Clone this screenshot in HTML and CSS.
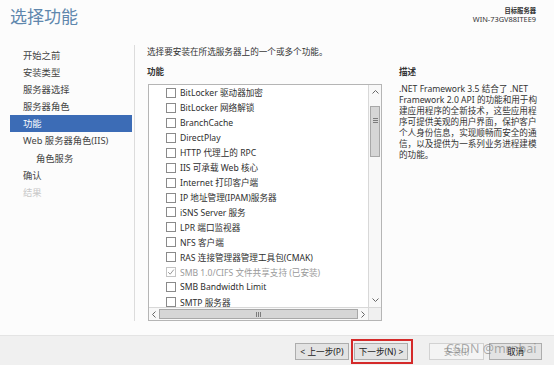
FILE: index.html
```html
<!DOCTYPE html>
<html>
<head>
  <meta charset="UTF-8">
  <title>添加角色和功能向导 - 选择功能</title>
  <link rel="stylesheet" href="styles.css">
</head>
<body>
  <div class="header">
    <h1 class="title">选择功能</h1>
    <div class="target">
      <div class="target-label">目标服务器</div>
      <div class="target-name">WIN-73GV88ITEE9</div>
    </div>
  </div>

  <div class="main">
    <div class="nav">
      <div class="nav-item">开始之前</div>
      <div class="nav-item">安装类型</div>
      <div class="nav-item">服务器选择</div>
      <div class="nav-item">服务器角色</div>
      <div class="nav-item active">功能</div>
      <div class="nav-item">Web 服务器角色(IIS)</div>
      <div class="nav-item sub">角色服务</div>
      <div class="nav-item">确认</div>
      <div class="nav-item disabled">结果</div>
    </div>

    <div class="content">
      <p class="intro">选择要安装在所选服务器上的一个或多个功能。</p>
      <div class="columns">
        <div class="features">
          <h2 class="heading">功能</h2>
          <div class="listbox">
            <div class="items">
              <div class="item"><span class="check"></span>BitLocker 驱动器加密</div>
              <div class="item"><span class="check"></span>BitLocker 网络解锁</div>
              <div class="item"><span class="check"></span>BranchCache</div>
              <div class="item"><span class="check"></span>DirectPlay</div>
              <div class="item"><span class="check"></span>HTTP 代理上的 RPC</div>
              <div class="item"><span class="check"></span>IIS 可承载 Web 核心</div>
              <div class="item"><span class="check"></span>Internet 打印客户端</div>
              <div class="item"><span class="check"></span>IP 地址管理(IPAM)服务器</div>
              <div class="item"><span class="check"></span>iSNS Server 服务</div>
              <div class="item"><span class="check"></span>LPR 端口监视器</div>
              <div class="item"><span class="check"></span>NFS 客户端</div>
              <div class="item"><span class="check"></span>RAS 连接管理器管理工具包(CMAK)</div>
              <div class="item installed"><span class="check"><svg width="8" height="8" viewBox="0 0 8 8"><path d="M1.2 4.2 L3.2 6.2 L6.8 1.6" fill="none" stroke="#9a9a9a" stroke-width="1"/></svg></span>SMB 1.0/CIFS 文件共享支持 (已安装)</div>
              <div class="item"><span class="check"></span>SMB Bandwidth Limit</div>
              <div class="item"><span class="check"></span>SMTP 服务器</div>
            </div>
            <div class="vscroll">
              <div class="arrow"><svg width="7" height="4" viewBox="0 0 7 4"><path d="M0.5 3.5 L3.5 0.5 L6.5 3.5" fill="none" stroke="#666" stroke-width="1"/></svg></div>
              <div class="track">
                <div class="vthumb"><span class="grip"></span></div>
              </div>
              <div class="arrow"><svg width="7" height="4" viewBox="0 0 7 4"><path d="M0.5 0.5 L3.5 3.5 L6.5 0.5" fill="none" stroke="#666" stroke-width="1"/></svg></div>
            </div>
            <div class="hscroll">
              <div class="arrow"><svg width="4" height="7" viewBox="0 0 4 7"><path d="M3.5 0.5 L0.5 3.5 L3.5 6.5" fill="none" stroke="#666" stroke-width="1"/></svg></div>
              <div class="hthumb"><span class="hgrip"></span></div>
              <div class="arrow"><svg width="4" height="7" viewBox="0 0 4 7"><path d="M0.5 0.5 L3.5 3.5 L0.5 6.5" fill="none" stroke="#666" stroke-width="1"/></svg></div>
            </div>
            <div class="corner"></div>
          </div>
        </div>

        <div class="description">
          <h2 class="heading">描述</h2>
          <p class="desc-text">.NET Framework 3.5 结合了 .NET<br>Framework 2.0 API 的功能和用于构<br>建应用程序的全新技术，这些应用程<br>序可提供美观的用户界面，保护客户<br>个人身份信息，实现顺畅而安全的通<br>信，以及提供为一系列业务进程建模<br>的功能。</p>
        </div>
      </div>
    </div>
  </div>

  <div class="footer">
    <button class="btn">&lt; 上一步(P)</button>
    <span class="highlight"><button class="btn">下一步(N) &gt;</button></span>
    <button class="btn install" disabled>安装(I)</button>
    <button class="btn cancel">取消</button>
    <span class="watermark">CSDN @mrnbai</span>
  </div>
</body>
</html>
```

FILE: styles.css
```css
:root {
  --title-color: #5f87ad;
  --select-color: #3c6cb6;
  --text-color: #333;
  --border-color: #b5b5b5;
  --bar-color: #f0f0f0;
}

html, body {
  margin: 0;
  padding: 0;
}

body {
  width: 554px;
  height: 365px;
  overflow: hidden;
  background: #fcfcfc;
  color: var(--text-color);
  font-family: "Noto Sans", "Noto Sans CJK SC", sans-serif;
  display: flex;
  flex-direction: column;
}

/* header */
.header {
  height: 40px;
  flex-shrink: 0;
  display: flex;
  justify-content: space-between;
}

.title {
  margin: 0;
  padding: 7px 0 0 10px;
  font-size: 17px;
  line-height: 20px;
  font-weight: normal;
  color: var(--title-color);
}

.target {
  padding: 7px 18px 0 0;
  text-align: right;
  color: #333;
}

.target-label {
  font-size: 6.3px;
  line-height: 7.5px;
  font-weight: bold;
}

.target-name {
  font-size: 7.4px;
  line-height: 8px;
}

/* main area */
.main {
  flex: 1;
  display: flex;
}

.nav {
  width: 122px;
  margin: 5px 0 14px 10px;
  padding: 1.5px 2px 0 0;
  border-right: 1px solid #dcdcdc;
  font-size: 9.3px;
}

.nav-item {
  height: 17.2px;
  line-height: 17.2px;
  padding-left: 13px;
  color: #444;
  white-space: nowrap;
}

.nav-item.active {
  background: var(--select-color);
  color: white;
}

.nav-item.sub {
  padding-left: 26px;
}

.nav-item.disabled {
  color: #c8c8c8;
}

.content {
  flex: 1;
  margin: 5px 0 0 12px;
  font-size: 8.6px;
}

.intro {
  margin: 0;
  line-height: 15px;
}

.columns {
  display: flex;
  gap: 18px;
  margin-top: 5px;
}

.features {
  width: 234px;
  flex-shrink: 0;
}

.heading {
  margin: 0 0 4px;
  font-size: 8.6px;
  line-height: 15px;
  font-weight: bold;
}

/* feature list */
.listbox {
  box-sizing: border-box;
  width: 234px;
  height: 237px;
  margin-left: 1px;
  border: 1px solid var(--border-color);
  background: white;
  display: grid;
  grid-template-columns: 1fr 13px;
  grid-template-rows: 1fr 13px;
}

.items {
  overflow: hidden;
  padding-top: 0.5px;
}

.item {
  height: 14.95px;
  display: flex;
  align-items: center;
  padding-left: 17px;
  white-space: nowrap;
  color: #2e2e2e;
}

.check {
  width: 8px;
  height: 8px;
  margin-right: 4px;
  flex-shrink: 0;
  border: 1px solid #8a8a8a;
  background: white;
  display: flex;
}

.item.installed {
  color: #9a9a9a;
}

.item.installed .check {
  border-color: #c4c4c4;
}

.vscroll {
  display: flex;
  flex-direction: column;
  border-left: 1px solid #d8d8d8;
  background: #f8f8f8;
}

.arrow {
  display: flex;
  align-items: center;
  justify-content: center;
  flex-shrink: 0;
}

.vscroll .arrow {
  height: 14px;
}

.track {
  flex: 1;
  padding-top: 7px;
}

.vthumb {
  box-sizing: border-box;
  height: 51px;
  margin: 0 1px;
  background: #d6d6d6;
  border: 1px solid #a8a8a8;
  display: flex;
  justify-content: center;
  padding-top: 11px;
}

.grip {
  width: 5px;
  height: 6px;
  background: repeating-linear-gradient(#7c7c7c 0 1px, #d6d6d6 1px 2px);
}

.hscroll {
  display: flex;
  border-top: 1px solid #d8d8d8;
  background: #f8f8f8;
}

.hscroll .arrow {
  width: 10px;
}

.hthumb {
  flex: 1;
  margin: 1px 0;
  background: #d6d6d6;
  border: 1px solid #a8a8a8;
  display: flex;
  align-items: center;
  justify-content: center;
}

.hgrip {
  width: 6px;
  height: 5px;
  background: repeating-linear-gradient(90deg, #7c7c7c 0 1px, #d6d6d6 1px 2px);
}

.corner {
  background: var(--bar-color);
  border-top: 1px solid #d8d8d8;
  border-left: 1px solid #d8d8d8;
}

/* description */
.description {
  width: 150px;
}

.desc-text {
  margin: 0;
  line-height: 11px;
  white-space: nowrap;
}

/* footer buttons */
.footer {
  position: relative;
  height: 28px;
  flex-shrink: 0;
  border-top: 1px solid #e4e4e4;
  background: var(--bar-color);
  display: flex;
  align-items: center;
  justify-content: flex-end;
  padding: 1px 12px 0 0;
}

.btn {
  box-sizing: border-box;
  height: 17px;
  width: 54px;
  padding: 0;
  border: 1px solid #adadad;
  background: #e3e3e3;
  color: #222;
  font-family: inherit;
  font-size: 8.6px;
  display: flex;
  align-items: center;
  justify-content: center;
}

.highlight {
  margin-left: 2px;
  padding: 2px 3px 2px 1px;
  border: 2px solid #d42a2a;
  display: flex;
}

.btn.install {
  width: 55px;
  margin-left: 16px;
  background: #f4f4f4;
  border-color: #d2d2d2;
  color: #a8a8a8;
}

.btn.cancel {
  width: 53px;
  margin-left: 5px;
}

.watermark {
  position: absolute;
  left: 446px;
  top: 5px;
  font-size: 12.5px;
  line-height: 16px;
  color: rgba(120, 120, 120, 0.6);
  white-space: nowrap;
  pointer-events: none;
}
```
